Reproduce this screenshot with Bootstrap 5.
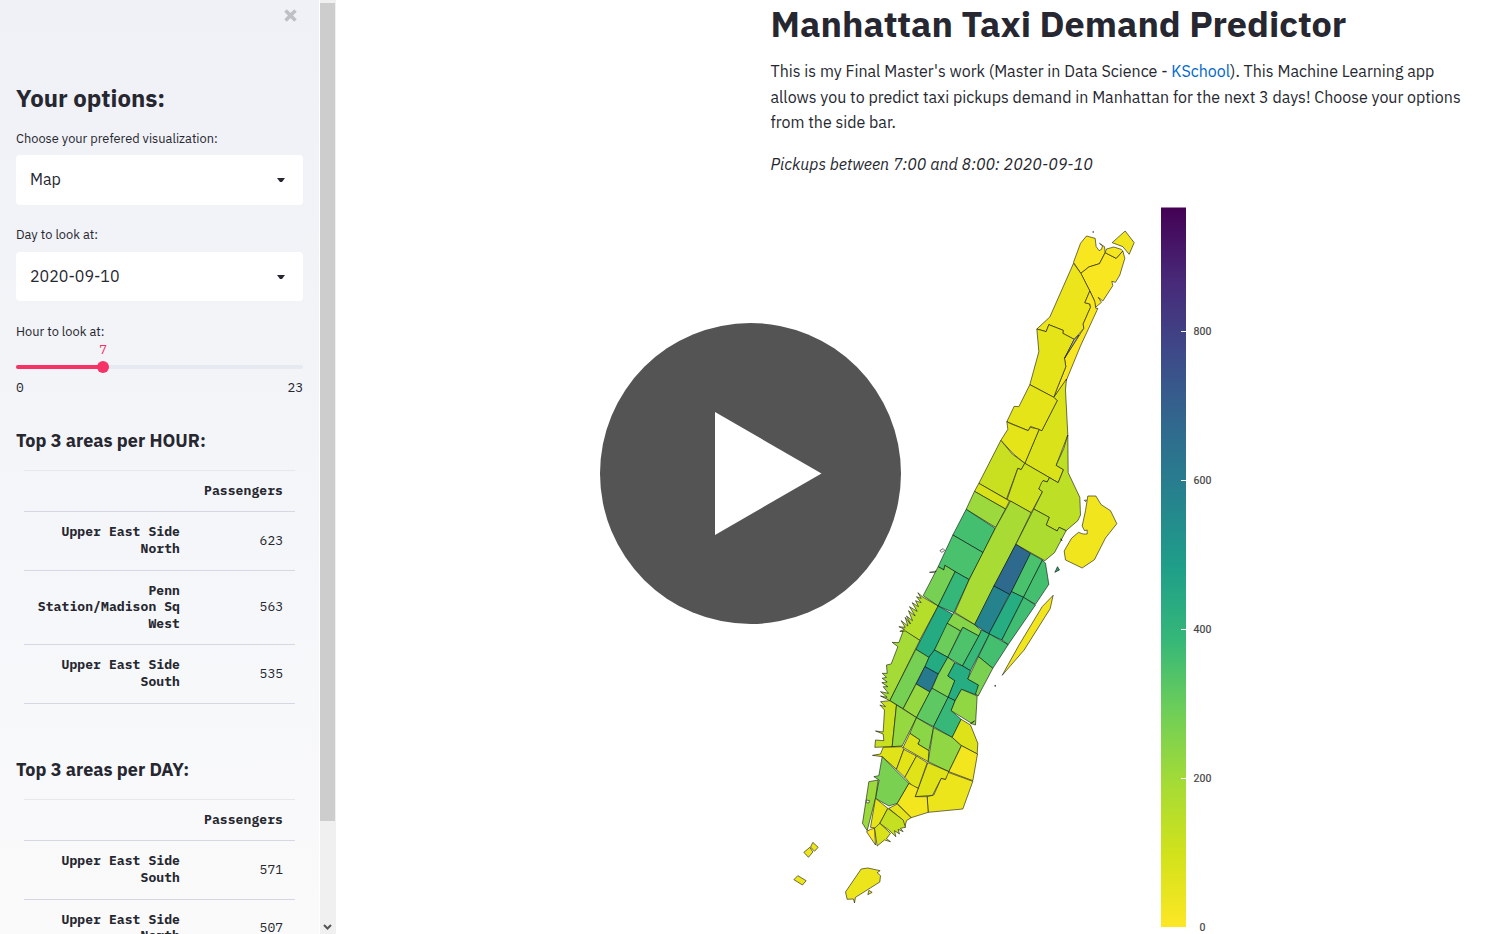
<!DOCTYPE html>
<html lang="en">
<head>
<meta charset="utf-8">
<meta name="viewport" content="width=device-width, initial-scale=1">
<title>Manhattan Taxi Demand Predictor</title>
<link href="https://cdn.jsdelivr.net/npm/bootstrap@5.3.0/dist/css/bootstrap.min.css" rel="stylesheet">
<style>
body{font-family:"IBM Plex Sans",Roboto,sans-serif;color:#262730;font-size:16px;line-height:25.6px;background:#fff}
.side-panel{width:320px;background:linear-gradient(#f0f1f6 0,#f3f4f8 40%,#f7f8fa 75%,#fafafa 100%);padding:0 16px;border-right:1px solid #fff}
.close-x{height:78px;padding:9px 5px 0 0}
h1{font-size:36px;font-weight:700;line-height:44px}
h2{font-size:24px;font-weight:700;line-height:32px}
h3{font-size:18px;font-weight:700;line-height:24px}
.field-label{font-size:12.8px;line-height:20px}
.picker{height:50px;background:#fff;border-radius:4px;padding:0 18px 0 14px}
.mono{font-family:"IBM Plex Mono","Liberation Mono",monospace;font-size:13px}
.track{height:4px;border-radius:2px;background:#e6e9ef}
.track-fill{height:4px;border-radius:2px;background:#f63366}
.thumb{width:12px;height:12px;border-radius:50%;background:#f63366;top:-4px;margin-left:-6px}
.thumb-value{color:#f63366;top:-25px;line-height:20px;margin-left:-4px}
.areas{margin:0 8px;width:271px;table-layout:fixed;text-align:right;line-height:16.64px;border-top:1px solid #e6e8ec}
.areas th,.areas td{padding:12px;vertical-align:middle;border-bottom:1px solid #d5d8e2}
.areas th{letter-spacing:.1px}
.areas th:first-child{width:168px}
.scrollrail{width:16px;background:#f0f0f0}
.scrollthumb{width:15px;height:818px;margin-top:3px;background:#cdcdcd}
.content-col{width:734.5px;padding-top:2px}
.intro a{color:#0068c9;text-decoration:none}
.map{display:block}
.map polygon{stroke:#000;stroke-opacity:.55;stroke-width:1px;vector-effect:non-scaling-stroke}
.play{left:600px;top:323px}
</style>
</head>
<body class="overflow-hidden">
<div class="d-flex vh-100 overflow-hidden position-relative">
<aside class="side-panel flex-shrink-0 overflow-hidden">
  <div class="close-x d-flex justify-content-end"><svg width="15" height="14" viewBox="0 0 15 14"><path d="M2.500 1.500l10 10M12.500 1.500l-10 10" stroke="#bfc0c5" stroke-width="3.600"/></svg></div>
  <h2 class="mb-0 mt-0 pt-1"><span>Your options:</span></h2>
  <div class="field-label" style="margin-top:15px">Choose your prefered visualization:</div>
  <div class="picker d-flex align-items-center justify-content-between" style="margin-top:6px"><span>Map</span><svg width="8" height="4" viewBox="0 0 8 4"><path d="M0 0h8L5 4H3z" fill="#262730"/></svg></div>
  <div class="field-label" style="margin-top:20px">Day to look at:</div>
  <div class="picker d-flex align-items-center justify-content-between" style="margin-top:7px;height:49px"><span>2020-09-10</span><svg width="8" height="4" viewBox="0 0 8 4"><path d="M0 0h8L5 4H3z" fill="#262730"/></svg></div>
  <div class="field-label" style="margin-top:21px">Hour to look at:</div>
  <div class="track position-relative" style="margin-top:23px">
    <div class="track-fill" style="width:30.43%"></div>
    <span class="thumb position-absolute" style="left:30.43%"></span>
    <span class="thumb-value mono position-absolute" style="left:30.43%">7</span>
  </div>
  <div class="mono d-flex justify-content-between" style="margin-top:6px"><span>0</span><span>23</span></div>
  <h3 class="mb-0" style="margin-top:28px">Top 3 areas per HOUR:</h3>
  <table class="areas mono" style="margin-top:17px">
    <tr><th></th><th>Passengers</th></tr>
    <tr><th>Upper East Side North</th><td>623</td></tr>
    <tr><th>Penn Station/Madison Sq West</th><td>563</td></tr>
    <tr><th>Upper East Side South</th><td>535</td></tr>
  </table>
  <h3 class="mb-0" style="margin-top:54px">Top 3 areas per DAY:</h3>
  <table class="areas mono" style="margin-top:17px">
    <tr><th></th><th>Passengers</th></tr>
    <tr><th>Upper East Side South</th><td>571</td></tr>
    <tr><th>Upper East Side North</th><td>507</td></tr>
  </table>
</aside>
<div class="scrollrail flex-shrink-0 d-flex flex-column justify-content-between"><div class="scrollthumb"></div><svg width="15" height="14" viewBox="0 0 15 14"><path d="M4 5l3.500 3.500L11 5" fill="none" stroke="#555" stroke-width="2"/></svg></div>
<main class="content-col ms-auto flex-shrink-0">
  <h1 class="mb-0">Manhattan Taxi Demand Predictor</h1>
  <p class="intro mb-0" style="margin-top:13px">This is my Final Master's work (Master in Data Science - <a href="#">KSchool</a>). This Machine Learning app<br>allows you to predict taxi pickups demand in Manhattan for the next 3 days! Choose your options<br>from the side bar.</p>
  <p class="intro fst-italic mb-0 mt-3">Pickups between 7:00 and 8:00: 2020-09-10</p>
  <svg class="map" style="margin-top:17.6px" width="480" height="739" viewBox="770.500 195 480 739">
  <defs><linearGradient id="viridis" x1="0" y1="0" x2="0" y2="1">
    <stop offset="0" stop-color="#440154"/><stop offset=".1" stop-color="#482878"/><stop offset=".2" stop-color="#3e4989"/><stop offset=".3" stop-color="#31688e"/><stop offset=".4" stop-color="#26828e"/><stop offset=".5" stop-color="#1f9e89"/><stop offset=".6" stop-color="#35b779"/><stop offset=".7" stop-color="#6ece58"/><stop offset=".8" stop-color="#a5db36"/><stop offset=".9" stop-color="#d2e21b"/><stop offset="1" stop-color="#fde725"/>
  </linearGradient></defs>
  <!-- Inwood and Washington Heights -->
  <g transform="translate(1000 220) scale(.33333)">
    <polygon fill="#f8e621" points="219,127 240,70 258,48 284,55 287,80 296,92 303,88 306,78 297,70 312,80 314,98 297,131 265,141 241,160"/>
    <polygon fill="#f8e621" points="314,98 347,115 367,93 373,115 358,165 345,187 334,184 337,197 307,243 293,232 303,247 285,262 280,238 268,213 241,160 265,141 297,131"/>
    <polygon fill="#f4e61e" points="314,98 318,87 340,81 362,88 367,93 347,115"/>
    <polygon fill="#f1e51d" points="374,33 401,68 386,103 367,80 335,68"/>
    <polygon fill="#ece51b" points="219,130 241,160 268,213 253,248 268,252 270,262 248,312 250,325 221,358 187,340 188,331 145,314 137,335 109,327 148,291"/>
    <polygon fill="#f8e621" points="268,213 283,245 286,265 292,265 289,272 240,378 198,480 160,532 168,510 190,455 196,440 192,415 250,325 248,312 270,262 268,252 253,248"/>
    <polygon fill="#e5e419" points="109,327 137,335 145,314 188,331 187,340 221,358 192,415 196,440 168,510 160,532 88,494 115,395"/>
    <polygon fill="#bbb" points="221,358 236,345 206,393 192,415"/>
    <polygon fill="#555" points="277,35 279,35 279,37 277,37"/>
  </g>
  <!-- Harlem -->
  <g transform="translate(970 370) scale(.33333)">
    <polygon fill="#dae319" points="288,27 285,60 292,195 257,286 279,299 263,338 163,280 206,178 214,182 260,92 250,82"/>
    <polygon fill="#e5e419" points="178,44 250,82 260,92 214,182 180,169 173,182 109,155 131,109 145,110"/>
    <polygon fill="#e5e419" points="109,155 118,160 173,182 180,172 206,178 163,280 130,253 91,211 112,178"/>
    <polygon fill="#c8e020" points="91,211 125,252 163,280 152,299 142,295 108,387 25,340"/>
    <polygon fill="#cde11d" points="163,280 237,323 230,336 218,332 213,347 205,357 216,365 182,428 110,388 142,295 152,299"/>
  </g>
  <!-- East Harlem, Central Park, Upper West Side and Upper East Side -->
  <g transform="translate(920 480) scale(.33333)">
    <polygon fill="#bddf26" points="442,-135 443,-22 478,52 480,105 472,122 437,152 416,142 410,153 377,135 386,112 340,87 366,35 355,27 363,8 368,2 380,6 387,-7 413,8 429,-31 407,-44 430,-95"/>
    <polygon fill="#d8e219" points="175,10 267,63 255,87 162,34"/>
    <polygon fill="#9bd93c" points="162,34 255,87 226,142 217,137 137,88"/>
    <polygon fill="#44bf70" points="137,88 224,145 188,218 97,165"/>
    <polygon fill="#4ac16d" points="97,165 188,218 146,299 104,275 73,256 70,270 53,260"/>
    <polygon fill="#75d054" points="53,260 70,270 73,256 104,275 53,378 8,347"/>
    <polygon fill="#35b779" points="104,275 146,299 100,398 53,378"/>
    <polygon fill="#a8db34" points="270,63 332,98 286,193 222,318 163,434 103,397 146,299 226,142"/>
    <polygon fill="#addc30" points="340,87 386,112 377,135 410,153 416,142 437,152 402,218 373,242 286,193"/>
    <polygon fill="#2e6a8e" points="286,193 330,220 268,345 220,318"/>
    <polygon fill="#4ac16d" points="330,220 366,240 309,352 273,335"/>
    <polygon fill="#44bf70" points="366,240 375,250 385,313 345,373 309,352"/>
    <polygon fill="#2f9f70" points="403,277 411,260 417,270"/>
    <polygon fill="#f1e51d" points="502,48 526,48 542,74 570,92 589,131 555,174 522,239 485,264 435,240 431,213 453,175 474,157 488,162 500,162 500,150 492,152 485,138 495,92"/>
    <polygon fill="none" points="58,212 68,206 73,211 64,217"/>
    <polygon fill="none" points="27,277 47,273 42,278"/>
    <polygon fill="none" points="421,176 425,182 422,181"/>
    <polygon fill="none" points="491,61 498,60 495,65"/>
  </g>
  <!-- Midtown North and Roosevelt Island -->
  <g transform="translate(890 580) scale(.33333)">
    <polygon fill="#25838e" points="310,18 357,43 295,162 252,134"/>
    <polygon fill="#26ad81" points="363,35 399,52 334,180 295,162"/>
    <polygon fill="#40bd72" points="399,52 435,75 353,194 334,180"/>
    <polygon fill="#f1e51d" points="488,46 479,86 401,210 335,286 385,196 455,80"/>
    <polygon fill="#b5de2b" points="98,52 143,78 87,181 45,155 28,154 42,148 25,140 44,142 32,122 52,138 44,112 60,132 48,108 66,122 54,92 74,108 57,80 80,94 65,68 84,80 75,62 92,68 78,50 92,55 82,38"/>
    <polygon fill="#25ab82" points="143,78 187,103 132,210 115,232 76,208"/>
    <polygon fill="#86d549" points="190,98 252,134 273,153 265,168 217,142 210,153 170,130"/>
    <polygon fill="#6ccd5a" points="170,130 210,153 172,232 132,210"/>
    <polygon fill="#4ec36b" points="217,142 265,168 216,258 172,232"/>
    <polygon fill="#37b878" points="273,150 297,162 240,272 216,258 265,168"/>
    <polygon fill="#44bf70" points="297,162 353,194 307,265 264,230"/>
    <polygon fill="#777" points="313,316 315,316 315,319 313,319"/>
  </g>
  <!-- Chelsea, Midtown South, Gramercy and the Villages -->
  <g transform="translate(860 660) scale(.33333)">
    <polygon fill="#a5db36" points="135,-87 178,-59 88,122 60,108 80,112 60,95 84,100 68,80 82,80 64,68 80,66 65,55 78,52 65,40 80,40 78,15 92,12 112,-40 95,-53 115,-52 128,-87"/>
    <polygon fill="#25ab82" points="222,-30 262,-8 233,43 193,20 205,-8"/>
    <polygon fill="#75d054" points="166,-32 205,-8 193,20 128,146 88,122"/>
    <polygon fill="#277a8e" points="193,20 234,42 208,96 167,72"/>
    <polygon fill="#95d840" points="167,72 208,96 168,173 128,146"/>
    <polygon fill="#7fd34e" points="262,-8 283,8 262,48 283,62 263,112 215,85 232,45"/>
    <polygon fill="#26ad81" points="283,8 306,18 330,32 322,57 354,75 348,105 303,88 284,122 263,112 283,62 262,48"/>
    <polygon fill="#7ad151" points="354,-10 397,25 353,108 345,102 354,75 322,57"/>
    <polygon fill="#5ec962" points="215,85 263,112 219,200 168,173 208,96"/>
    <polygon fill="#37b878" points="263,112 284,122 272,152 302,178 275,232 219,200"/>
    <polygon fill="#90d743" points="284,122 303,88 350,108 345,195 330,190 342,183 333,190 272,152"/>
    <polygon fill="#c8e020" points="88,122 108,135 95,260 43,262 45,240 70,242 68,222 45,213 68,216 72,150 58,135 75,140 60,125"/>
    <polygon fill="#95d840" points="108,135 168,173 125,258 95,260"/>
    <polygon fill="#8bd646" points="168,173 219,203 205,272 172,252 178,240 148,220"/>
    <polygon fill="#dae319" points="148,220 178,240 172,252 205,272 203,305 128,262"/>
    <polygon fill="#90d743" points="219,203 275,232 303,257 265,335 203,305"/>
    <polygon fill="#dde318" points="302,178 330,195 352,250 350,282 303,257 275,232"/>
  </g>
  <!-- Downtown -->
  <g transform="translate(850 740) scale(.33333)">
    <polygon fill="#f4e61e" points="333,17 381,42 367,122 295,95"/>
    <polygon fill="#ece51b" points="290,96 367,124 337,207 233,217 230,170 250,165 272,115 285,118"/>
    <polygon fill="#dfe318" points="232,68 295,95 285,118 272,115 246,166 194,170"/>
    <polygon fill="#dfe318" points="98,22 155,20 160,28 138,88 95,50 66,46 90,42"/>
    <polygon fill="#e2e418" points="160,28 198,48 163,112 138,88"/>
    <polygon fill="#dfe318" points="198,48 230,68 203,145 185,138 163,112"/>
    <polygon fill="#f4e61e" points="175,130 203,145 194,170 230,170 233,217 182,233 140,190"/>
    <polygon fill="#7ad151" points="95,50 175,130 140,190 115,198 75,175 86,120 70,110 85,107"/>
    <polygon fill="#9bd93c" points="55,125 83,120 75,175 50,272 36,250"/>
    <polygon fill="#fff" points="47,180 57,182 55,189 48,188"/>
    <polygon fill="#e5e419" points="75,175 112,205 80,265 60,262"/>
    <polygon fill="#e5e419" points="115,205 140,192 182,233 168,242 163,262 154,238"/>
    <polygon fill="#c5e021" points="112,205 158,240 165,262 150,265 158,275 143,268 147,282 132,272 136,290 115,270 88,250"/>
    <polygon fill="#dae319" points="88,250 120,280 108,296 120,305 102,300 80,318 72,265"/>
    <polygon fill="#fde725" points="72,265 75,315 48,275 60,268"/>
  </g>
  <!-- Harbour islands -->
  <g transform="translate(780 830) scale(.33333)" fill="#ece51b">
    <polygon points="242,117 262,114 299,122 290,128 300,137 298,156 225,202 222,219 219,207 200,208 195,186"/>
    <polygon points="265,181 275,187 262,194"/>
    <polygon points="97,37 113,52 102,64 90,51"/>
    <polygon points="88,52 97,66 84,82 70,67"/>
    <polygon points="52,137 77,152 66,165 40,149"/>
  </g>
  <rect x="1160.500" y="207.500" width="25" height="719.500" fill="url(#viridis)"/>
  <path d="M1180.500 331.500h5m-5 149h5m-5 149h5m-5 149h5m-5 149h5" stroke="#fff"/>
  <g font-family="Roboto" font-size="10.500" fill="#444" stroke="#444" stroke-width=".2">
    <text x="1193" y="335" textLength="18">800</text><text x="1193" y="484" textLength="18">600</text><text x="1193" y="633" textLength="18">400</text><text x="1193" y="782" textLength="18">200</text><text x="1199" y="931">0</text>
  </g>
  </svg>
</main>
<svg class="play position-absolute" width="302" height="302" viewBox="0 0 302 302"><circle cx="150.500" cy="150.500" r="150.500" fill="#545454"/><path d="M115 89l106.500 61.500L115 212z" fill="#fff"/></svg>
</div>
<script src="https://cdn.jsdelivr.net/npm/bootstrap@5.3.0/dist/js/bootstrap.bundle.min.js"></script>
</body>
</html>
